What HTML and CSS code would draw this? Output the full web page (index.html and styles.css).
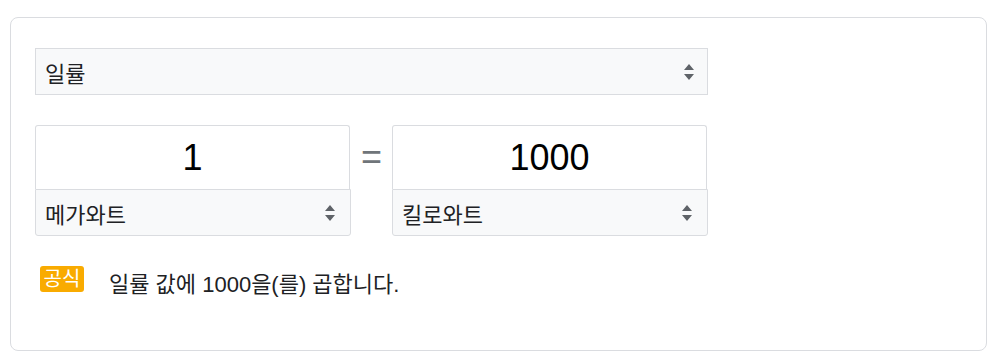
FILE: index.html
```html
<!DOCTYPE html>
<html lang="ko">
<head>
  <meta charset="UTF-8">
  <meta name="viewport" content="width=device-width, initial-scale=1.0">
  <title>단위 변환</title>
  <link rel="stylesheet" href="styles.css">
</head>
<body>
<div class="card">
  <div class="select select-kind">
    <span>일률</span>
    <svg class="arrows" width="10" height="16" viewBox="0 0 10 16"><path d="M5 0 L10 6 H0 Z M0 10 H10 L5 16 Z"/></svg>
  </div>

  <div class="convert">
    <div class="unit">
      <div class="value">1</div>
      <div class="select select-unit">
        <span>메가와트</span>
        <svg class="arrows" width="10" height="16" viewBox="0 0 10 16"><path d="M5 0 L10 6 H0 Z M0 10 H10 L5 16 Z"/></svg>
      </div>
    </div>
    <div class="equals">=</div>
    <div class="unit">
      <div class="value">1000</div>
      <div class="select select-unit">
        <span>킬로와트</span>
        <svg class="arrows" width="10" height="16" viewBox="0 0 10 16"><path d="M5 0 L10 6 H0 Z M0 10 H10 L5 16 Z"/></svg>
      </div>
    </div>
  </div>

  <div class="formula">
    <span class="badge">공식</span>
    <span class="formula-text">일률 값에 1000을(를) 곱합니다.</span>
  </div>
</div>
</body>
</html>
```

FILE: styles.css
```css
html, body {
  margin: 0;
  background: #fff;
}
body {
  font-family: "Liberation Sans", Arial, "Noto Sans CJK KR", sans-serif;
  color: #202124;
  padding: 17px 0 0 10px;
}
.card {
  box-sizing: border-box;
  width: 977px;
  height: 334px;
  border: 1px solid #dadce0;
  border-radius: 8px;
  padding: 30px 24px 0 24px;
}
.select {
  box-sizing: border-box;
  display: flex;
  align-items: center;
  justify-content: space-between;
  background: #f8f9fa;
  border: 1px solid #dadce0;
  font-size: 22px;
  color: #202124;
}
.select-kind {
  width: 673px;
  height: 47px;
  padding: 0 13px 0 9px;
}
.arrows {
  fill: #5f6368;
}
.convert {
  display: flex;
  margin-top: 30px;
}
.unit {
  width: 316px;
  display: flex;
  flex-direction: column;
}
.value {
  box-sizing: border-box;
  height: 64px;
  border: 1px solid #dadce0;
  border-bottom: none;
  border-radius: 3px 3px 0 0;
  margin-right: 1px;
  display: flex;
  align-items: center;
  justify-content: center;
  font-size: 36px;
  color: #000;
}
.select-unit {
  height: 47px;
  padding: 0 15px 0 9px;
  border-radius: 0 0 3px 3px;
}
.equals {
  width: 41px;
  display: flex;
  justify-content: center;
  padding-top: 12px;
  font-size: 36px;
  line-height: 40px;
  color: #70757a;
}
.formula {
  display: flex;
  align-items: flex-start;
  margin-top: 30px;
  padding-left: 5px;
}
.badge {
  box-sizing: border-box;
  height: 26px;
  width: 44px;
  background: #f9ab00;
  color: #fff;
  border-radius: 3px;
  font-size: 20px;
  line-height: 26px;
  text-align: center;
}
.formula-text {
  margin-left: 25px;
  margin-top: 6px;
  font-size: 22px;
  line-height: 26px;
  color: #202124;
}
```
